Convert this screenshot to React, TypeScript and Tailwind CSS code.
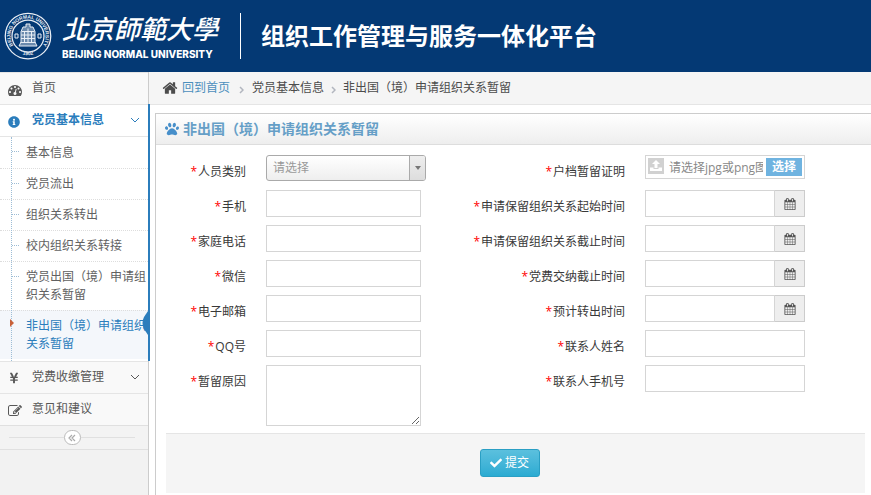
import React, { useState } from "react";
import { FaCheck, FaInfoCircle, FaPaw, FaYenSign } from "react-icons/fa";

const paths = {
    dashboard:
        "M384 1152q0-53-37.5-90.5t-90.5-37.5-90.5 37.5-37.5 90.5 37.5 90.5 90.5 37.5 90.5-37.5 37.5-90.5zm192-448q0-53-37.5-90.5t-90.5-37.5-90.5 37.5-37.5 90.5 37.5 90.5 90.5 37.5 90.5-37.5 37.5-90.5zm428 481l101-382q6-26-7.5-48.5t-38.5-29.5-48 6.5-30 39.5l-101 382q-60 5-107 43.5t-63 98.5q-20 77 20 146t117 89 146-20 89-117q16-60-6-117t-72-91zm660-33q0-53-37.5-90.5t-90.5-37.5-90.5 37.5-37.5 90.5 37.5 90.5 90.5 37.5 90.5-37.5 37.5-90.5zm-640-640q0-53-37.5-90.5t-90.5-37.5-90.5 37.5-37.5 90.5 37.5 90.5 90.5 37.5 90.5-37.5 37.5-90.5zm448 192q0-53-37.5-90.5t-90.5-37.5-90.5 37.5-37.5 90.5 37.5 90.5 90.5 37.5 90.5-37.5 37.5-90.5zm320 448q0 261-141 483-19 29-54 29h-1402q-35 0-54-29-141-221-141-483 0-182 71-348t191-286 286-191 348-71 348 71 286 191 191 286 71 348z",
    home: "M1472 992v480q0 26-19 45t-45 19h-384v-384h-256v384h-384q-26 0-45-19t-19-45v-480q0-1 .5-3t.5-3l575-474 575 474q1 2 1 6zm223-69l-62 74q-8 9-21 11h-3q-13 0-21-7l-692-577-692 577q-12 8-24 7-13-2-21-11l-62-74q-8-10-7-23.5t11-21.5l719-599q32-26 76-26t76 26l244 204v-195q0-14 9-23t23-9h192q14 0 23 9t9 23v408l219 182q10 8 11 21.5t-7 23.5z",
    edit: "M888 1184l116-116-152-152-116 116v56h96v96h56zm440-720q-16-16-33 1l-350 350q-17 17-1 33t33-1l350-350q17-17 1-33zm80 594v190q0 119-84.5 203.5t-203.5 84.5h-832q-119 0-203.5-84.5t-84.5-203.5v-832q0-119 84.5-203.5t203.5-84.5h832q63 0 117 25 15 7 18 23 3 17-9 29l-49 49q-14 14-32 8-23-6-45-6h-832q-66 0-113 47t-47 113v832q0 66 47 113t113 47h832q66 0 113-47t47-113v-126q0-13 9-22l64-64q15-15 35-7t20 29zm-96-738l288 288-672 672h-288v-288zm444 132l-92 92-288-288 92-92q28-28 68-28t68 28l152 152q28 28 28 68t-28 68z",
    calendar:
        "M192 1664h288v-288h-288v288zm352 0h320v-288h-320v288zm-352-352h288v-320h-288v320zm352 0h320v-320h-320v320zm-352-384h288v-288h-288v288zm736 736h320v-288h-320v288zm-384-736h320v-288h-320v288zm768 736h288v-288h-288v288zm-384-352h320v-320h-320v320zm-352-864v-288q0-13-9.5-22.5t-22.5-9.5h-64q-13 0-22.5 9.5t-9.5 22.5v288q0 13 9.5 22.5t22.5 9.5h64q13 0 22.5-9.5t9.5-22.5zm736 864h288v-320h-288v320zm-384-384h320v-288h-320v288zm384 0h288v-288h-288v288zm32-480v-288q0-13-9.5-22.5t-22.5-9.5h-64q-13 0-22.5 9.5t-9.5 22.5v288q0 13 9.5 22.5t22.5 9.5h64q13 0 22.5-9.5t9.5-22.5zm384-64v1280q0 52-38 90t-90 38h-1408q-52 0-90-38t-38-90v-1280q0-52 38-90t90-38h128v-96q0-66 47-113t113-47h64q66 0 113 47t47 113v96h384v-96q0-66 47-113t113-47h64q66 0 113 47t47 113v96h128q52 0 90 38t38 90z",
};

function Icon({ name, className }: { name: keyof typeof paths; className?: string }) {
    return (
        <svg viewBox="0 0 1792 1792" fill="currentColor" className={className} aria-hidden="true">
            <path d={paths[name]} />
        </svg>
    );
}

function Seal() {
    return (
        <svg viewBox="0 0 96 96" className="size-12 shrink-0" fill="none" stroke="#e9eef5" aria-hidden="true">
            <circle cx="48" cy="48" r="45.5" strokeWidth="2.5" />
            <circle cx="48" cy="48" r="32" strokeWidth="2.5" />
            <path id="sealTop" d="M17.700 65.500A35 35 0 1 1 78.300 65.500" stroke="none" />
            <path id="sealBottom" d="M28 81A41 41 0 0 0 68 81" stroke="none" />
            <g fill="#e9eef5" stroke="none" fontFamily="Liberation Sans, sans-serif" fontWeight="700">
                <text fontSize="10">
                    <textPath href="#sealTop" startOffset="50%" textAnchor="middle">
                        BEIJING NORMAL UNIVERSITY
                    </textPath>
                </text>
                <text fontSize="10">
                    <textPath href="#sealBottom" startOffset="50%" textAnchor="middle">
                        1902
                    </textPath>
                </text>
            </g>
            <path d="M44 24h8v6h6l4 9v21l4 8H30l4-8V39l4-9h6z" fill="#e9eef5" fillOpacity="0.45" strokeWidth="2" />
            <path d="M35 39h26M34 46h28M34 53h28M33 61h30M41 39v22M48 33v28M55 39v22" strokeWidth="2" />
            <path d="M22 44h6v8h-6zM68 44h6v8h-6z" strokeWidth="2" />
        </svg>
    );
}

function Chevron() {
    return (
        <svg viewBox="0 0 10 6" className="w-2.5 h-1.5 ml-auto mr-2 mt-3" fill="none" stroke="currentColor" aria-hidden="true">
            <path d="M1 1l4 4 4-4" />
        </svg>
    );
}

function Crumb() {
    return (
        <svg viewBox="0 0 5 8" className="w-[5px] h-2 mt-1" fill="none" stroke="#b2b6bf" strokeWidth="1.5" aria-hidden="true">
            <path d="M1 1l3 3-3 3" />
        </svg>
    );
}

const submenu = [
    "基本信息",
    "党员流出",
    "组织关系转出",
    "校内组织关系转接",
    "党员出国（境）申请组织关系暂留",
    "非出国（境）申请组织关系暂留",
];

const rows = [
    { left: "人员类别", leftType: "select", right: "户档暂留证明", rightType: "file" },
    { left: "手机", leftType: "text", right: "申请保留组织关系起始时间", rightType: "date" },
    { left: "家庭电话", leftType: "text", right: "申请保留组织关系截止时间", rightType: "date" },
    { left: "微信", leftType: "text", right: "党费交纳截止时间", rightType: "date" },
    { left: "电子邮箱", leftType: "text", right: "预计转出时间", rightType: "date" },
    { left: "QQ号", leftType: "text", right: "联系人姓名", rightType: "wide" },
    { left: "暂留原因", leftType: "textarea", right: "联系人手机号", rightType: "wide" },
];

const inputStyle = "block h-[27px] border border-[#d5d5d5] bg-white px-1 text-xs outline-none focus:border-[#f59942]";

function Field({ id, type }: { id: string; type: string }) {
    if (type === "select") {
        return (
            <div className="relative w-40 h-[27px]">
                <select
                    id={id}
                    defaultValue=""
                    className="appearance-none block w-full h-[26px] rounded-[3px] border border-[#aaa] bg-linear-to-b from-white to-[#eee] pl-1.5 pr-5 text-xs text-[#999] outline-none"
                >
                    <option value="">请选择</option>
                </select>
                <span className="absolute right-px top-px h-6 w-4 rounded-r-[2px] border-l border-[#aaa] bg-linear-to-b from-[#eee] to-[#ddd] flex items-center justify-center pointer-events-none">
                    <svg viewBox="0 0 6 4" className="w-1.5 h-1" fill="#777" aria-hidden="true">
                        <path d="M0 0h6L3 4z" />
                    </svg>
                </span>
            </div>
        );
    }
    if (type === "file") {
        return (
            <div className="flex items-start w-40 h-6 border border-[#d5d5d5] p-0.5 relative">
                <span className="size-4 shrink-0 bg-[#d1d1d1] flex items-center justify-center">
                    <svg viewBox="0 0 12 12" className="size-3" fill="white" aria-hidden="true">
                        <path d="M6 0l4 4H7.500v4h-3V4H2zM0 7.500h3.500V9h5V7.500H12V11H0z" />
                    </svg>
                </span>
                <span className="ml-[5px] w-[94px] overflow-hidden whitespace-nowrap leading-5 text-[#888]">
                    请选择jpg或png图片
                </span>
                <span className="ml-auto h-[18px] w-9 bg-[#6fb3e0] text-white text-center font-bold leading-[18px]">
                    选择
                </span>
                <input id={id} type="file" className="absolute inset-0 w-full opacity-0" />
            </div>
        );
    }
    if (type === "date") {
        return (
            <div className="flex w-40">
                <input id={id} type="text" className={`${inputStyle} w-[130px]`} />
                <button
                    type="button"
                    aria-label="选择日期"
                    className="flex-1 h-[27px] border border-l-0 border-[#ccc] bg-[#eee] text-[#555] flex items-center justify-center"
                >
                    <Icon name="calendar" className="size-3" />
                </button>
            </div>
        );
    }
    if (type === "textarea") {
        return (
            <textarea id={id} className="block w-[155px] h-[61px] border border-[#d5d5d5] bg-white p-1 text-xs outline-none" />
        );
    }
    return <input id={id} type="text" className={`${inputStyle} ${type === "wide" ? "w-40" : "w-[155px]"}`} />;
}

function Label({ htmlFor, text }: { htmlFor: string; text: string }) {
    return (
        <label htmlFor={htmlFor} className="pt-[7px] h-[27px] text-right leading-5 whitespace-nowrap text-[#393939]">
            <span className="text-[#f00] mr-px">*</span>
            {text}
        </label>
    );
}

export default function App() {
    const [isActive, setActive] = useState(5);

    return (
        <div className="min-h-screen flex flex-col bg-white text-xs text-[#393939] font-['Open_Sans','Noto_Sans_CJK_SC',sans-serif]">
            <header className="flex items-center h-18 shrink-0 bg-[#043974] text-white overflow-hidden pl-1">
                <Seal />
                <div className="ml-2.5 w-[160px] shrink-0 whitespace-nowrap">
                    <p className="text-[26px] leading-8 italic font-medium font-['Noto_Sans_CJK_TC',sans-serif]">北京師範大學</p>
                    <p className="mt-1 text-[10px] leading-3 font-extrabold font-['Inter',sans-serif]">
                        BEIJING NORMAL UNIVERSITY
                    </p>
                </div>
                <div className="ml-[18px] w-px h-[46px] bg-white" />
                <h1 className="ml-5 text-2xl leading-8 font-bold whitespace-nowrap">组织工作管理与服务一体化平台</h1>
            </header>

            <div className="flex flex-1">
                <aside className="w-[149px] shrink-0 border-r border-[#ccc] bg-[#f2f2f2]">
                    <ul className="text-[#585858] leading-[18px]">
                        <li className="flex h-8 border-t border-[#e5e5e5] bg-[#f9f9f9] pl-2">
                            <Icon name="dashboard" className="size-3.5 mt-2.5" />
                            <a href="#" className="ml-2.5 pt-1.5">
                                首页
                            </a>
                        </li>
                        <li className="relative border-t border-[#e5e5e5] bg-white">
                            <div className="flex h-[31px] pl-2 text-[#2b7dbc]">
                                <FaInfoCircle className="size-3 mt-[11px] mr-0.5" />
                                <a href="#" className="ml-2.5 pt-1.5 font-bold">
                                    党员基本信息
                                </a>
                                <Chevron />
                            </div>
                            <ul className="relative border-t border-[#e5e5e5] pb-0.5">
                                {submenu.map((item, index) => (
                                    <li
                                        key={item}
                                        className={`relative pl-[26px] pb-1.5 ${index > 0 ? "border-t border-dotted border-[#ddd] pt-1.5" : "pt-[7px]"} ${
                                            isActive === index ? "bg-[#f4f7fb] text-[#2b7dbc]" : "text-[#616161]"
                                        }`}
                                    >
                                        {isActive === index ? (
                                            <>
                                                <svg viewBox="0 0 4 8" className="absolute z-10 left-2.5 top-2 w-1 h-2" fill="#c86139" aria-hidden="true">
                                                    <path d="M0 0l4 4-4 4z" />
                                                </svg>
                                                <svg viewBox="0 0 6 24" className="absolute right-0 top-0 w-1.5 h-6" fill="#2b7dbc" aria-hidden="true">
                                                    <path d="M6 0v24L2 18Q-1 12 2 6z" />
                                                </svg>
                                            </>
                                        ) : (
                                            <span className="absolute left-3 top-3.5 w-[7px] border-t border-dotted border-[#9dbdd6]" />
                                        )}
                                        <a href="#" onClick={() => setActive(index)}>
                                            {item}
                                        </a>
                                    </li>
                                ))}
                                <li aria-hidden="true" className="absolute left-[11px] inset-y-0 border-l border-dotted border-[#9dbdd6]" />
                            </ul>
                            <span className="absolute -right-0.5 -top-px bottom-0 w-0.5 bg-[#2b7dbc]" />
                        </li>
                        <li className="flex h-8 border-t border-[#e5e5e5] bg-[#f9f9f9] pl-2">
                            <FaYenSign className="size-3 mt-2.5 mr-0.5" />
                            <a href="#" className="ml-2.5 pt-1.5">
                                党费收缴管理
                            </a>
                            <Chevron />
                        </li>
                        <li className="flex h-8 border-t border-[#e5e5e5] bg-[#f9f9f9] pl-2">
                            <Icon name="edit" className="size-3.5 mt-2.5" />
                            <a href="#" className="ml-2.5 pt-1.5">
                                意见和建议
                            </a>
                        </li>
                    </ul>
                    <div className="flex items-center h-[25px] border-y border-[#e0e0e0] bg-[#f3f3f3] px-[9px]">
                        <span className="flex-1 h-px bg-[#e0e0e0]" />
                        <button
                            type="button"
                            aria-label="收起菜单"
                            className="w-[17px] h-[15px] rounded-full border border-[#bbb] bg-white flex items-center justify-center"
                        >
                            <svg viewBox="0 0 8 8" className="size-2" fill="none" stroke="#aaa" aria-hidden="true">
                                <path d="M4 1L1 4l3 3M7 1L4 4l3 3" strokeWidth="1.2" />
                            </svg>
                        </button>
                        <span className="flex-1 h-px bg-[#e0e0e0] mr-1" />
                    </div>
                </aside>

                <main className="flex-1 min-w-0 flex flex-col">
                    <nav className="flex items-center h-[33px] shrink-0 border-b border-[#e5e5e5] bg-[#f5f5f5] pl-[13px] whitespace-nowrap text-[#4c4c4c]">
                        <Icon name="home" className="size-4 mr-1" />
                        <a href="#" className="text-[#4c8fbd]">
                            回到首页
                        </a>
                        <span className="w-[22px] flex justify-center">
                            <Crumb />
                        </span>
                        <span>党员基本信息</span>
                        <span className="w-[19px] flex justify-center">
                            <Crumb />
                        </span>
                        <span>非出国（境）申请组织关系暂留</span>
                    </nav>

                    <section className="flex-1 mt-2 ml-1.5 border-l border-t border-[#ccc]">
                        <h2 className="flex items-center h-[31px] border-b border-[#ddd] bg-linear-to-b from-white to-[#eee] pl-[9px] text-sm font-bold text-[#669fc7]">
                            <FaPaw className="size-3.5 mr-1 text-[#478fca]" />
                            非出国（境）申请组织关系暂留
                        </h2>
                        <form className="pt-2.5 pl-2.5 pr-1.5" onSubmit={(e) => e.preventDefault()}>
                            <div className="grid grid-cols-[80px_160px_minmax(160px,1fr)_220px] gap-x-5 gap-y-2">
                                {rows.map((row, index) => (
                                    <React.Fragment key={row.left}>
                                        <Label htmlFor={`left${index}`} text={row.left} />
                                        <Field id={`left${index}`} type={row.leftType} />
                                        <Label htmlFor={`right${index}`} text={row.right} />
                                        <Field id={`right${index}`} type={row.rightType} />
                                    </React.Fragment>
                                ))}
                            </div>
                            <div className="mt-[7px] mb-0.5 flex justify-center h-[60px] border-t border-[#e5e5e5] bg-[#f5f5f5] pt-[15px] pr-3">
                                <button
                                    type="submit"
                                    className="flex items-center justify-center w-15 h-7 rounded-[3px] border border-[#2a9fc4] bg-linear-to-b from-[#5bc0de] to-[#2aabd2] text-white"
                                >
                                    <FaCheck className="size-3 mr-[3px]" />
                                    提交
                                </button>
                            </div>
                        </form>
                    </section>
                </main>
            </div>
        </div>
    );
}
